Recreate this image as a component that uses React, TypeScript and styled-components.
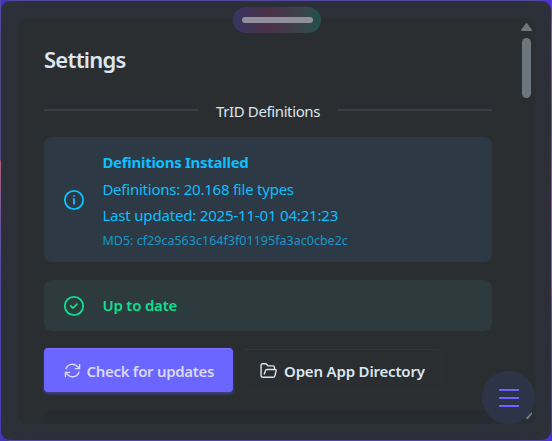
import React from 'react';
import styled, { createGlobalStyle } from 'styled-components';

const GlobalStyle = createGlobalStyle`
  * { box-sizing: border-box; }
  html, body { margin: 0; overflow: hidden; background: #4234be; }
  body { font-family: "Noto Sans", "Open Sans", sans-serif; color: #dce6ef; }
`;

const Backdrop = styled.div`
  width: 552px;
  height: 441px;
  padding: 1px;
  background: linear-gradient(180deg, #5449a5 0 29px, #514a83 30px 160px, #aa5b80 161px 170px, #65579c 225px, #5148a2 290px, #4739b7 100%) left / 1px 100% no-repeat,
    linear-gradient(180deg, #5540c5 0, #7c58c2 35px, #6357a0 125px, #8657a6 180px, #9d5a97 240px, #9d5a97 275px, #5950ab 310px, #4234be 100%) right / 1px 100% no-repeat,
    linear-gradient(90deg, #4234be 0 8px, #52499e 9px 540px, #5032d3 544px);
`;

const Window = styled.main`
  position: relative;
  width: 550px;
  height: 439px;
  padding: 17px;
  border-radius: 9px;
  background: #2d3039;
  overflow: hidden;
`;

const Panel = styled.section`
  display: flex;
  width: 517px;
  height: 406px;
  padding-left: 26px;
  border-radius: 9px;
  overflow: hidden;
  background: #2a2e31;
  box-shadow: 0 0 14px rgba(40, 50, 53, .32);
`;

const Content = styled.div`
  width: 448px;
  flex-shrink: 0;
  padding-top: 25px;
`;

const Title = styled.h1`
  margin: 0;
  height: 32px;
  font-size: 22px;
  line-height: 32px;
  font-weight: 600;
  letter-spacing: -.75px;
`;

const Divider = styled.div`
  display: flex;
  align-items: center;
  gap: 18px;
  height: 24px;
  margin-top: 23px;
  font-size: 15px;
  &::before, &::after { content: ""; height: 2px; flex: 1; margin-top: -1px; background: #393f45; }
`;

const DividerText = styled.span`
  width: 104px;
  padding-top: 2px;
  white-space: nowrap;
  letter-spacing: -.38px;
`;

const Alert = styled.div<{ $success?: boolean }>`
  display: flex;
  align-items: center;
  gap: 17.4px;
  height: ${p => p.$success ? 51 : 125}px;
  margin-top: ${p => p.$success ? 18 : 15}px;
  padding-left: 19px;
  border-radius: 8px;
  background: ${p => p.$success ? '#2d3a3e' : '#2d3a45'};
  color: ${p => p.$success ? '#10df8f' : '#0cbfff'};
`;

const Icon = styled.svg<{ $size: number }>`
  width: ${p => p.$size}px;
  height: ${p => p.$size}px;
  flex-shrink: 0;
  fill: none;
  stroke: currentColor;
  stroke-width: 2;
  stroke-linecap: round;
  stroke-linejoin: round;
`;

const Details = styled.div`
  display: flex;
  flex-direction: column;
  padding-top: 2px;
`;

const Detail = styled.div<{ $weight?: number; $small?: boolean; $spacing: number }>`
  height: ${p => p.$small ? 23 : 26.5}px;
  line-height: ${p => p.$small ? 23 : 26.5}px;
  font-size: ${p => p.$small ? 12.5 : 15}px;
  font-weight: ${p => p.$weight || 400};
  letter-spacing: ${p => p.$spacing}px;
  white-space: nowrap;
  opacity: ${p => p.$small ? .7 : 1};
`;

const Actions = styled.div`
  display: flex;
  align-items: center;
  gap: 10px;
  height: 44px;
  margin-top: 17px;
`;

const Button = styled.button<{ $primary?: boolean }>`
  display: flex;
  align-items: center;
  gap: ${p => p.$primary ? 6 : 7}px;
  width: ${p => p.$primary ? 189 : 199}px;
  height: ${p => p.$primary ? 44 : 42}px;
  padding: 1px 0 0 ${p => p.$primary ? 18.5 : 16}px;
  border: 1px solid ${p => p.$primary ? '#6a65fe' : '#2d3135'};
  border-top-color: ${p => p.$primary ? '#7975ff' : '#33373b'};
  border-radius: 4px;
  background: ${p => p.$primary ? '#6a66ff' : '#2a2e31'};
  box-shadow: ${p => p.$primary ? '0 2px 3px rgba(82, 78, 205, .6)' : 'none'};
  color: ${p => p.$primary ? '#d9d9f4' : '#dce6ef'};
  font: 600 15px "Noto Sans", sans-serif;
`;

const ButtonText = styled.span<{ $spacing: number }>`
  letter-spacing: ${p => p.$spacing}px;
  white-space: nowrap;
`;

const NextCard = styled.div`
  height: 40px;
  margin-top: 18px;
  border-radius: 8px;
  background: #292b32;
`;

const ScrollRail = styled.div`
  display: flex;
  flex-direction: column;
  align-items: center;
  width: 15px;
  margin-left: 27px;
  padding: 5px 0 6px;
`;

const ScrollTop = styled.div`
  display: flex;
  flex-direction: column;
  align-items: center;
  gap: 7px;
`;

const Arrow = styled.svg`
  display: block;
  width: 11px;
  height: 8px;
  fill: #6e777e;
`;

const Thumb = styled.div`
  width: 9px;
  height: 60px;
  border-radius: 5px;
  background: #6d767c;
`;

const DragPill = styled.div`
  position: absolute;
  top: 6px;
  left: 232px;
  display: flex;
  align-items: center;
  justify-content: center;
  width: 88px;
  height: 26px;
  border-radius: 13px;
  background: linear-gradient(90deg, #363661 0, #4c3048 40%, #3b434a 76%, #22504d 100%);
`;

const DragBar = styled.div`
  width: 71px;
  height: 6px;
  border-radius: 3px;
  background: #908f9b;
`;

const MenuButton = styled.button`
  position: absolute;
  left: 481px;
  top: 370px;
  display: flex;
  align-items: center;
  justify-content: center;
  width: 53px;
  height: 53px;
  padding: 0;
  border: 0;
  border-radius: 50%;
  background: #2e3447;
  color: #6963ff;
`;

const MenuGlyph = styled.svg`
  width: 20px;
  height: 18px;
  margin: 1px 0 0 1px;
  fill: currentColor;
`;

const ArrowTip = styled.svg`
  position: absolute;
  left: 524px;
  top: 410px;
  width: 8px;
  height: 9px;
  fill: #777d84;
`;

export default function App() {
  return (
    <>
      <GlobalStyle />
      <Backdrop>
        <Window>
          <Panel>
            <Content>
              <Title>Settings</Title>
              <Divider><DividerText>TrID Definitions</DividerText></Divider>
              <Alert>
                <Icon $size={22} viewBox="0 0 24 24"><circle cx="12" cy="12" r="10" /><path d="M11.5 11h.5v5M12 7.5h.01" /></Icon>
                <Details>
                  <Detail $weight={700} $spacing={-.28}>Definitions Installed</Detail>
                  <Detail $spacing={-.23}>Definitions: 20.168 file types</Detail>
                  <Detail $spacing={-.18}>Last updated: 2025-11-01 04:21:23</Detail>
                  <Detail $small $spacing={.02}>MD5: cf29ca563c164f3f01195fa3ac0cbe2c</Detail>
                </Details>
              </Alert>
              <Alert $success>
                <Icon $size={22} viewBox="0 0 24 24"><circle cx="12" cy="12" r="10" /><path d="m8.5 12 2.3 2.3 4.5-4.3" /></Icon>
                <Detail $weight={600} $spacing={-.2}>Up to date</Detail>
              </Alert>
              <Actions>
                <Button $primary>
                  <Icon $size={17} viewBox="0 0 24 24"><path d="M16 9.3h6V3.4M2 20.6v-6h6M2.8 9.5A9.5 9.5 0 0 1 18.6 6L22 9.3M2 14.7 5.4 18a9.5 9.5 0 0 0 15.8-3.5" /></Icon>
                  <ButtonText $spacing={-.3}>Check for updates</ButtonText>
                </Button>
                <Button>
                  <Icon $size={17} viewBox="0 0 24 24"><path d="M4 21.5a2.5 2.5 0 0 1-2.5-2.5V4.5a2 2 0 0 1 2-2h5l3 3H18a2.5 2.5 0 0 1 2.5 2.5v2M6 17l1.8-5a2 2 0 0 1 2-1.5h11.5a1.5 1.5 0 0 1 1.5 2L21 19.5a2.5 2.5 0 0 1-2.4 2H4" /></Icon>
                  <ButtonText $spacing={-.18}>Open App Directory</ButtonText>
                </Button>
              </Actions>
              <NextCard />
            </Content>
            <ScrollRail>
              <ScrollTop>
                <Arrow viewBox="0 0 11 8"><path d="M5 .3q.5-.5 1 0l4.7 6.2q.5 1.5-1 1.5H1.3Q-.2 8 .3 6.5Z" /></Arrow>
                <Thumb />
              </ScrollTop>
            </ScrollRail>
          </Panel>
          <DragPill><DragBar /></DragPill>
          <MenuButton aria-label="Menu">
            <MenuGlyph viewBox="0 0 20 18"><path d="M0 0h20v2H0zM0 8h20v2H0zM0 16h20v2H0z" /></MenuGlyph>
          </MenuButton>
          <ArrowTip viewBox="0 0 8 9"><path d="M7 1v2L3 8H1V7Z" /></ArrowTip>
        </Window>
      </Backdrop>
    </>
  );
}
